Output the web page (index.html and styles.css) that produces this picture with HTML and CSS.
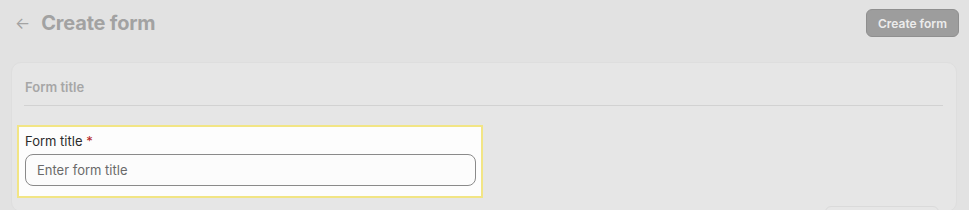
FILE: index.html
```html
<!DOCTYPE html>
<html lang="en">
<head>
	<meta charset="UTF-8">
	<title>Create form</title>
	<link rel="stylesheet" href="styles.css">
</head>
<body>
<div class="page">
	<div class="header">
		<div class="header-left">
			<span class="back">&#8592;</span>
			<h1>Create form</h1>
		</div>
		<button class="btn-create">Create form</button>
	</div>
	<div class="card">
		<h2>Form title</h2>
		<div class="row">
			<div class="field spot">
				<label>Form title <span class="req">*</span></label>
				<input type="text" placeholder="Enter form title">
			</div>
		</div>
		<div class="more">
			<div class="ghost"></div>
		</div>
	</div>
</div>
</body>
</html>
```

FILE: styles.css
```css
*{
	margin: 0;
	padding: 0;
	box-sizing: border-box;
}
html,body{
	background: #e2e2e2;
	font-family: Inter, "Noto Sans", sans-serif;
	overflow: hidden;
}
.page{
	padding: 9px 10px 0 11px;
}
.header{
	display: flex;
	justify-content: space-between;
	align-items: center;
	height: 28px;
}
.header-left{
	display: flex;
	align-items: center;
	gap: 12px;
	padding-left: 4px;
}
.back{
	color: #a3a3a3;
	font-size: 16px;
	line-height: 16px;
	margin-top: -1px;
}
h1{
	font-size: 20px;
	font-weight: 700;
	color: #a2a2a2;
	letter-spacing: -0.2px;
	margin-top: -1px;
	margin-left: -1px;
}
.btn-create{
	height: 28px;
	padding: 0 11px;
	background: #9d9d9d;
	border: 1px solid #8f8f8f;
	border-radius: 6px;
	color: #ececec;
	font-family: Inter, sans-serif;
	font-size: 12px;
	font-weight: 600;
}
.card{
	margin-top: 25px;
	width: 946px;
	background: #e6e6e6;
	border: 1px solid #dedede;
	border-radius: 10px;
	padding: 14px 13px 0 5px;
	height: 150px;
}
.card h2{
	font-size: 13px;
	font-weight: 600;
	color: #a6a6a6;
	line-height: 20px;
	margin-left: 7px;
	padding-left: 1px;
	padding-bottom: 8px;
	border-bottom: 1px solid #d2d2d2;
}
.row{
	margin-top: 19px;
}
.field{
	width: 466px;
	padding: 5px 7px 10px 6px;
}
.spot{
	background: #fdfdfd;
	border: 2px solid #f2e585;
}
.field label{
	display: block;
	font-size: 13px;
	color: #2c2c2c;
	line-height: 18px;
	margin-bottom: 4px;
}
.req{
	color: #b52424;
}
.field input{
	width: 451px;
	height: 32px;
	border: 1px solid #8a8a8a;
	border-radius: 8px;
	background: #fcfcfc;
	padding: 0 11px;
	font-family: Inter, sans-serif;
	font-size: 13px;
	color: #333;
	outline: none;
}
.field input::placeholder{
	color: #6a6a6a;
}
.more{
	display: flex;
	justify-content: flex-end;
	margin-top: 8px;
}
.ghost{
	width: 114px;
	height: 30px;
	border: 1px solid #dadada;
	border-radius: 6px;
	margin-right: 4px;
}
```
